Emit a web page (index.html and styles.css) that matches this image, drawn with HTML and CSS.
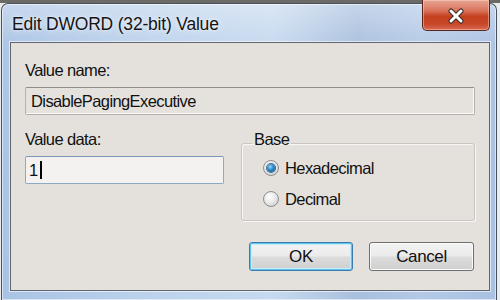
FILE: index.html
```html
<!DOCTYPE html>
<html>
<head>
<meta charset="utf-8">
<link rel="stylesheet" href="styles.css">
</head>
<body>
<div class="window">
  <div class="titlebar">
    <div class="title">Edit DWORD (32-bit) Value</div>
    <div class="close">
      <svg width="20" height="16" viewBox="0 0 20 16">
        <path d="M5 3 L15 13 M15 3 L5 13" stroke="#3a2a28" stroke-width="5" stroke-linecap="round"/>
        <path d="M5 3 L15 13 M15 3 L5 13" stroke="#ffffff" stroke-width="3" stroke-linecap="round"/>
      </svg>
    </div>
  </div>
  <div class="client">
    <div class="label">Value name:</div>
    <div class="field readonly">DisablePagingExecutive</div>
    <div class="lower">
      <div class="datacol">
        <div class="label">Value data:</div>
        <div class="field edit">1<span class="caret"></span></div>
      </div>
      <fieldset class="group">
        <legend class="legend">Base</legend>
        <div class="radio-row"><span class="radio checked"></span><span class="rtext">Hexadecimal</span></div>
        <div class="radio-row"><span class="radio"></span><span class="rtext">Decimal</span></div>
      </fieldset>
    </div>
    <div class="buttons">
      <div class="btn default">OK</div>
      <div class="btn">Cancel</div>
    </div>
  </div>
</div>
</body>
</html>
```
FILE: styles.css
```css
html, body {
  margin: 0;
  padding: 0;
  width: 500px;
  height: 300px;
  overflow: hidden;
}
body {
  background: linear-gradient(#6c6a66 0, #6c6a66 3px, #e9ecef 3px);
  font-family: "Liberation Sans", Arial, sans-serif;
  color: #111;
}
.window {
  margin: 3px 0 0 1px;
  width: 496px;
  height: 297px;
  box-sizing: border-box;
  border: 1px solid #48525e;
  border-bottom: none;
  border-radius: 7px 7px 0 0;
  padding: 0 6px 0 8px;
  background:
    linear-gradient(180deg, rgba(255,255,255,0.35) 0, rgba(255,255,255,0.05) 40px, rgba(255,255,255,0) 100%),
    linear-gradient(90deg, #a9c3e4 0, #bcd2ec 30%, #c6d9ef 55%, #a8bfdd 72%, #b3c9e6 85%, #a9c1e2 100%);
  box-shadow: inset 0 0 0 1px rgba(255,255,255,0.55);
}
.titlebar {
  height: 38px;
  display: flex;
  align-items: flex-start;
}
.title {
  flex: 1;
  padding: 10px 0 0 2px;
  font-size: 17.5px;
  line-height: 20px;
  letter-spacing: -0.2px;
  color: #141414;
  text-shadow: 0 0 6px rgba(255,255,255,0.85), 0 0 2px rgba(255,255,255,0.6);
}
.close {
  margin-top: -4px;
  width: 68px;
  height: 31px;
  box-sizing: border-box;
  border: 1px solid #5b2419;
  border-top: none;
  border-radius: 0 0 5px 5px;
  background: linear-gradient(180deg, #e7a593 0, #d9745c 35%, #c4401f 55%, #c8472a 80%, #d76a4e 100%);
  box-shadow: inset 0 0 0 1px rgba(255,220,210,0.45);
  display: flex;
  align-items: center;
  justify-content: center;
}
.close svg {
  display: block;
  margin-top: 1px;
}
.client {
  height: 249px;
  box-sizing: border-box;
  background: #e4e1dd;
  border: 1px solid #5f6670;
  box-shadow: 0 0 0 1px rgba(255,255,255,0.6);
  padding: 18px 14px 0 14px;
  display: flex;
  flex-direction: column;
  font-size: 16.5px;
  letter-spacing: -0.6px;
}
.label {
  line-height: 19px;
  height: 19px;
}
.field {
  margin-top: 7px;
  height: 28px;
  box-sizing: border-box;
  line-height: 26px;
  padding: 0 5px;
  border-radius: 2px;
  display: flex;
  align-items: center;
}
.readonly {
  background: #e5e2de;
  border: 1px solid #b4b1ad;
  border-top-color: #8f8c89;
  box-shadow: inset -1px -1px 0 #fbfaf8;
}
.edit {
  background: #f3f2f0;
  border: 1px solid #8ea8c8;
  border-top-color: #7c95b6;
  padding-left: 3px;
}
.caret {
  display: inline-block;
  width: 0;
  height: 18px;
  border-left: 2px solid #000;
  margin-left: 2px;
}
.lower {
  margin-top: 15px;
  display: flex;
  align-items: flex-start;
}
.datacol {
  width: 199px;
}
.group {
  margin: 0 0 0 17px;
  width: 234px;
  box-sizing: border-box;
  border: 1px solid #c9c6c1;
  border-radius: 3px;
  box-shadow: inset 1px 1px 0 #f8f7f5, 1px 1px 0 #f8f7f5;
  padding: 0 10px 10px 21px;
  min-width: 0;
}
.legend {
  padding: 0 2px 8px 2px;
  margin-left: -11px;
  line-height: 19px;
}
.radio-row {
  height: 22px;
  display: flex;
  align-items: center;
}
.radio-row + .radio-row {
  margin-top: 9px;
}
.radio {
  width: 16px;
  height: 16px;
  box-sizing: border-box;
  border-radius: 50%;
  border: 1px solid #8e8e8e;
  background: radial-gradient(circle at 40% 35%, #ffffff 0, #e9e9e9 45%, #c4c4c4 100%);
  display: flex;
  align-items: center;
  justify-content: center;
  margin-right: 6px;
  flex: none;
}
.radio.checked::after {
  content: "";
  width: 8px;
  height: 8px;
  border-radius: 50%;
  background: radial-gradient(circle at 40% 35%, #9fd8f7 0, #2c87c6 45%, #0f4f86 100%);
  box-shadow: 0 0 0 1px #3a6a92;
}
.rtext {
  line-height: 19px;
}
.buttons {
  margin-top: 21px;
  display: flex;
  justify-content: flex-end;
  gap: 16px;
  padding-right: 1px;
}
.btn {
  width: 105px;
  height: 29px;
  box-sizing: border-box;
  border: 1px solid #6f6f6f;
  border-radius: 3px;
  background: linear-gradient(180deg, #f3f3f3 0, #ebebeb 48%, #dcdcdc 52%, #cfcfcf 100%);
  box-shadow: inset 0 0 0 1px #fbfbfb;
  display: flex;
  align-items: center;
  justify-content: center;
  font-size: 17px;
  letter-spacing: -0.4px;
  color: #111;
}
.btn.default {
  width: 104px;
  border-color: #3d7bad;
  box-shadow: inset 0 0 0 1px #5fc4ee, inset 0 0 0 2px #c8ebf8;
}
```
